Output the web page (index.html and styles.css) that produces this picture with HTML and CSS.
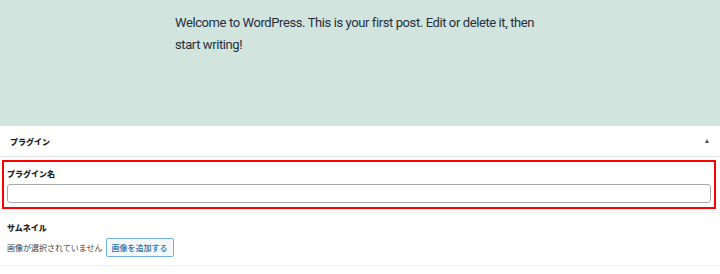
FILE: index.html
```html
<!DOCTYPE html>
<html lang="ja">
<head>
    <meta charset="UTF-8">
    <title>プラグイン</title>
    <link rel="stylesheet" href="styles.css">
</head>
<body>
    <div class="post-content">
        <p>Welcome to WordPress. This is your first post. Edit or delete it, then start writing!</p>
    </div>

    <div class="postbox">
        <div class="postbox-header">
            <h2>プラグイン</h2>
            <span class="toggle-arrow"></span>
        </div>
        <div class="field field-highlight">
            <label class="field-label" for="pluginName">プラグイン名</label>
            <input type="text" id="pluginName" class="field-input">
        </div>
        <div class="field field-thumb">
            <div class="field-label">サムネイル</div>
            <div class="thumb-row">
                <span class="thumb-empty">画像が選択されていません</span>
                <button class="button">画像を追加する</button>
            </div>
        </div>
    </div>
</body>
</html>
```

FILE: styles.css
```css
body {
    margin: 0;
    background: #fff;
    font-family: "Noto Sans CJK JP", sans-serif;
    color: #1d2327;
}
.post-content {
    background-color: #d1e4dd;
    height: 126px;
    padding: 12px 0 0 175px;
    box-sizing: border-box;
}
.post-content p {
    margin: 0;
    width: 380px;
    font-family: Roboto, "Liberation Sans", sans-serif;
    font-size: 13px;
    letter-spacing: -0.4px;
    line-height: 22px;
    color: #28303d;
}
.postbox {
    background: #fff;
}
.postbox-header {
    height: 30px;
    display: flex;
    align-items: center;
    justify-content: space-between;
    padding: 0 10px;
    border-bottom: 1px solid #e2e4e7;
}
.postbox-header h2 {
    margin: 0;
    font-size: 8px;
    font-weight: 900;
}
.toggle-arrow {
    width: 0;
    height: 0;
    border-left: 2.5px solid transparent;
    border-right: 2.5px solid transparent;
    border-bottom: 4px solid #50575e;
    margin-right: 1px;
}
.field-highlight {
    margin: 3px 4px 0 2px;
    border: 2px solid #f00;
    padding: 6px 3px 4px 3px;
}
.field-label {
    display: block;
    font-size: 8px;
    font-weight: 900;
    line-height: 12px;
    margin-bottom: 4px;
}
.field-input {
    display: block;
    width: 100%;
    box-sizing: border-box;
    height: 19px;
    border: 1px solid #a7aaad;
    border-radius: 3px;
    background: #fff;
    margin: 0;
}
.field-thumb {
    margin-top: 3px;
    border-top: 1px solid #f0f0f1;
    border-bottom: 1px solid #f0f0f1;
    padding: 9px 7px 8px;
}
.thumb-row {
    display: flex;
    align-items: center;
    gap: 3px;
}
.thumb-empty {
    font-size: 8px;
    color: #3c434a;
}
.button {
    font-family: "Noto Sans CJK JP", sans-serif;
    font-size: 8px;
    font-weight: 500;
    color: #2271b1;
    background: #f6f7f7;
    border: 1px solid #72aee6;
    border-radius: 2px;
    height: 19px;
    padding: 0 5px;
}
```
